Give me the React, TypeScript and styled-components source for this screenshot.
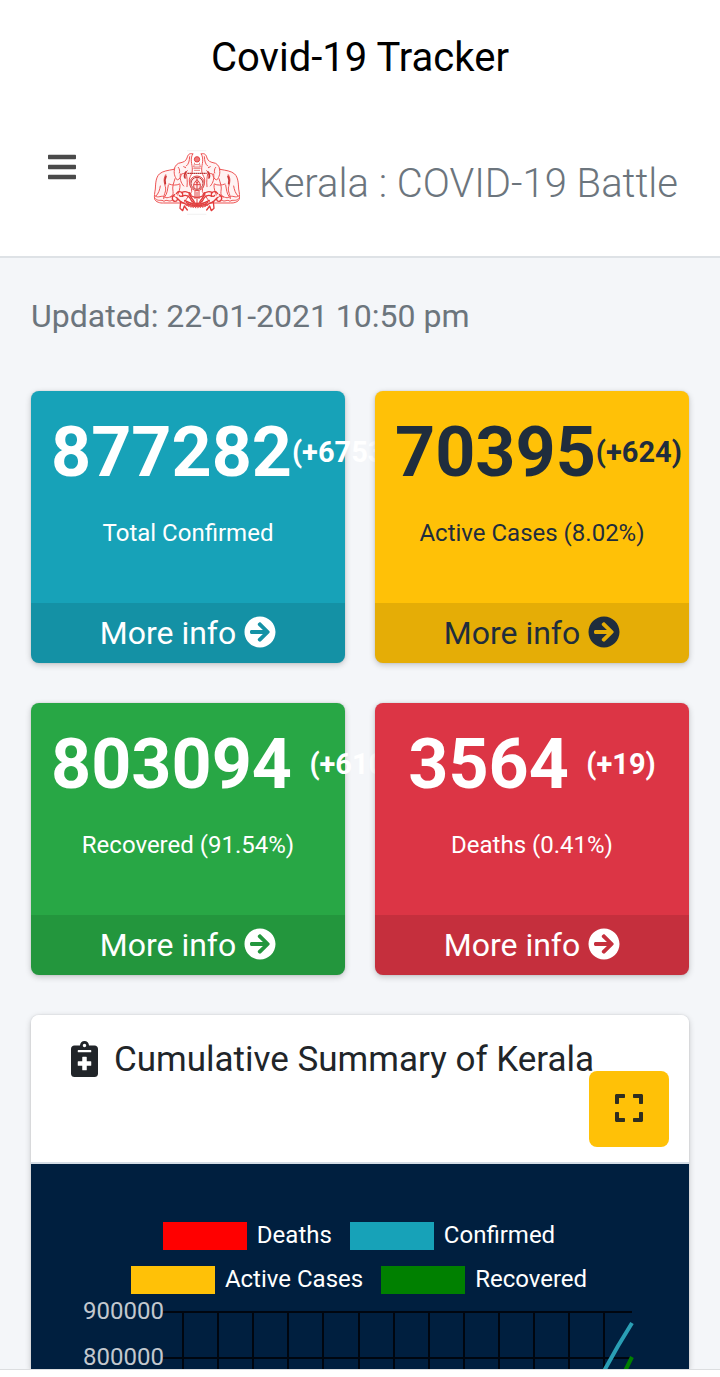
import React from "react";
import styled, { createGlobalStyle } from "styled-components";
import { FaArrowCircleRight, FaBars, FaExpand, FaNotesMedical } from "react-icons/fa";

const GlobalStyle = createGlobalStyle`
  *, *::before, *::after { box-sizing: border-box; }
  body {
    margin: 0;
    background: #fff;
    color: #212529;
    font-family: Roboto, "Liberation Sans", sans-serif;
  }
  h1, h2, h3, p { margin: 0; font-weight: 400; }
`;

const Shell = styled.div`
  min-height: 100vh;
  display: flex;
  flex-direction: column;
  overflow-x: hidden;
`;

const TitleBar = styled.header`
  display: flex;
  align-items: center;
  justify-content: center;
  height: 116px;
  background: #fff;
`;

const AppTitle = styled.h1`
  font-size: 40px;
  line-height: 48px;
  color: #000;
`;

const NavBar = styled.nav`
  display: flex;
  align-items: flex-start;
  justify-content: space-between;
  height: 142px;
  padding: 34px 42px 0 48px;
  background: #fff;
  border-bottom: 2px solid #dee2e6;
`;

const MenuButton = styled.button`
  display: flex;
  margin: 0;
  padding: 1px 0;
  border: 0;
  background: none;
  color: #4a4a4a;
  font-size: 32px;

  svg { width: 28px; height: 32px; }
`;

const Brand = styled.a`
  display: flex;
  align-items: center;
  gap: 19px;
  height: 68px;
  color: #6c757d;
  font-size: 40px;
  font-weight: 300;
  line-height: 48px;
  white-space: nowrap;
  text-decoration: none;
`;

const Crest = styled.svg`
  width: 88px;
  height: 68px;
`;

const Content = styled.main`
  flex: 1;
  display: flex;
  flex-direction: column;
  padding: 34px 31px 0;
  background: #f4f6f9;
`;

const Updated = styled.p`
  margin-bottom: 51px;
  font-size: 32px;
  line-height: 48px;
  color: #6c757d;
`;

const StatGrid = styled.section`
  display: grid;
  grid-template-columns: repeat(2, minmax(0, 1fr));
  gap: 40px 30px;
  margin-bottom: 40px;
`;

const StatCard = styled.article<{ $bg: string; $fg: string }>`
  position: relative;
  border-radius: 8px;
  background: ${(p) => p.$bg};
  color: ${(p) => p.$fg};
  box-shadow: 0 0 2px rgba(0, 0, 0, 0.125), 0 2px 6px rgba(0, 0, 0, 0.2);
`;

const StatBody = styled.div`
  padding: 20px 20px 52px;
  text-align: center;
`;

const StatValue = styled.h2`
  display: flex;
  justify-content: safe center;
  margin-bottom: 22px;
  font-size: 70px;
  font-weight: 700;
  line-height: 82px;
  white-space: pre;
`;

const Delta = styled.small`
  font-size: 29px;
`;

const StatLabel = styled.p`
  font-size: 24px;
  line-height: 36px;
`;

const MoreLink = styled.a`
  display: flex;
  align-items: center;
  justify-content: center;
  gap: 8px;
  height: 60px;
  border-radius: 0 0 8px 8px;
  background: rgba(0, 0, 0, 0.1);
  color: inherit;
  font-size: 32px;
  line-height: 48px;
  text-decoration: none;

  svg { margin-bottom: 2px; }
`;

const ChartCard = styled.section`
  flex: 1;
  display: flex;
  flex-direction: column;
  border-radius: 8px 8px 0 0;
  box-shadow: 0 0 2px rgba(0, 0, 0, 0.125), 0 2px 6px rgba(0, 0, 0, 0.2);
`;

const ChartHeader = styled.div`
  display: flex;
  flex-direction: column;
  padding: 23px 20px 15px;
  border-radius: 8px 8px 0 0;
  border-bottom: 2px solid #d5dde5;
  background: #fff;
`;

const ChartTitle = styled.h3`
  display: flex;
  align-items: center;
  gap: 16px;
  padding-left: 20px;
  font-size: 35px;
  line-height: 44px;
  white-space: nowrap;

  svg { width: 27px; height: 36px; margin-bottom: 2px; }
`;

const ExpandButton = styled.button`
  display: flex;
  align-items: center;
  justify-content: center;
  align-self: flex-end;
  width: 80px;
  height: 76px;
  margin: -11px 0 0;
  padding: 0 0 2px;
  border: 0;
  border-radius: 8px;
  background: #ffc107;
  color: #2f2e20;
  font-size: 32px;
`;

const ChartBody = styled.div`
  flex: 1;
  background: #001f3f;
`;

const Legend = styled.ul`
  display: flex;
  flex-wrap: wrap;
  justify-content: center;
  gap: 16px 18px;
  margin: 0;
  padding: 58px 22px 0 20px;
  list-style: none;
`;

const LegendItem = styled.li`
  display: flex;
  align-items: flex-start;
  gap: 10px;
  color: #fff;
  font-size: 24px;
  line-height: 26px;
`;

const Swatch = styled.span<{ $color: string }>`
  width: 84px;
  height: 28px;
  background: ${(p) => p.$color};
`;

const Plot = styled.svg`
  display: block;
  width: 100%;
  font-size: 24px;
`;

const BottomBar = styled.footer`
  position: relative;
  height: 8px;
  border-top: 1px solid #dcdee0;
  background: #fff;
`;

const stats = [
  { value: "877282", delta: "(+6753)", label: "Total Confirmed", bg: "#17a2b8", fg: "#fff" },
  { value: "70395", delta: "(+624)", label: "Active Cases (8.02%)", bg: "#ffc107", fg: "#1f2d3d" },
  { value: "803094 ", delta: "(+6109)", label: "Recovered (91.54%)", bg: "#28a745", fg: "#fff" },
  { value: "3564 ", delta: "(+19)", label: "Deaths (0.41%)", bg: "#dc3545", fg: "#fff" },
];

const series = [
  { name: "Deaths", color: "#ff0000" },
  { name: "Confirmed", color: "#17a2b8" },
  { name: "Active Cases", color: "#ffc107" },
  { name: "Recovered", color: "#008000" },
];

const gridColumns = Array.from({ length: 13 }, (_, i) => 152 + Math.round(i * 35.1));

/* One elephant with its share of the pedestal; the crest mirrors it. */
function Elephant() {
  return (
    <g fill="none" stroke="#ee5555" strokeWidth="3" strokeLinecap="round" strokeLinejoin="round">
      <path
        fill="#fff3f3"
        d="M157 38c-9-4-15 2-17 12-3 9-10 12-18 14-12 1-17 9-21 20-17 3-34 5-44 14-11 11-11 29-12 45-2 12-4 22-2 30 3 9 16 13 27 12h60l24-34c2-12-10-26-7-38 3-10 10-16 9-30 0-14-8-28 1-45z"
      />
      <path d="M148 46c-1 12-2 22-10 28M103 82c-4 12 0 26 8 34 8-3 11-10 12-18 8-1 14-4 18-10" />
      <path d="M114 78c4 4 5 12 3 17M130 76l6 3M120 98c-2 14 1 26 10 36M138 98c2 13 4 20 2 38" />
      <path d="M104 112c-4 14-9 24-6 38 2 8-2 14-8 17M86 128c9 4 22 5 32 0M119 130c1 13-4 22-7 31" />
      <path d="M76 100c-9 14-3 27 0 40 2 12-8 22-6 32M60 134c-2 12-5 22-13 30M84 131c-3 14-2 24-11 36" />
      <path stroke="#c93434" strokeWidth="5" d="M77 105c-5 9-4 15-2 22M137 92c-5 7-6 12-3 18" />
      <path d="M45 164c10 8 18-4 28 3 9 7 19-5 31-2M46 172c8 10 17 1 25 8 9-8 15 4 24-3" />
      <g stroke="#e23c3c" strokeWidth="4">
        <path d="M103 160c-10 4-9 19 1 20 8 0 10-10 3-12M108 157c6-9 16-8 19 0 2 8-7 11-10 5M113 173c7 9 19 15 32 17" />
        <path d="M121 181l-2 20 8 7 5-14 9 12M124 154c8-5 20-3 28 5M126 165c10-7 22 0 25 9 4 8 10 12 19 12" />
        <path d="M133 177c8 2 14 12 36 12M137 190c12 7 20 5 33 5M147 154c0 12 9 17 15 28" />
      </g>
    </g>
  );
}

function StateCrest() {
  return (
    <Crest viewBox="35 26 264 204" role="img" aria-label="Government of Kerala">
      <path d="M140 28h58M140 219h58" stroke="#ececec" strokeWidth="2" />
      <Elephant />
      <g transform="translate(340 0) scale(-1 1)">
        <Elephant />
      </g>
      <g fill="none" stroke="#e04040" strokeWidth="3">
        <circle cx="170" cy="54" r="8" fill="#f07878" />
        <path strokeWidth="2" d="M163 64l-3 13h20l-3-13M164 70h12M159 81h22M161 87h18" />
        <path stroke="#b93434" strokeWidth="4" strokeDasharray="5 1" d="M141 96h58" />
        <circle cx="170" cy="126" r="22" fill="#ffeaea" />
        <circle cx="170" cy="126" r="18" stroke="#b93434" strokeWidth="3" />
        <path d="M170 108v35M163 142c-7-12-1-18 7-27 8 9 14 15 7 27M160 130h20M165 120l5 6 5-6M164 149v24M176 149v24M170 151v36" />
        <path d="M145 157c7 9 16 11 25 11s18-2 25-11M136 181c16 16 52 16 68 0M150 184c8 6 32 6 40 0" strokeWidth="4" />
        <path strokeDasharray="4 3" strokeWidth="6" stroke="#e65a5a" d="M137 190c18 10 48 10 66 0" />
      </g>
    </Crest>
  );
}

export default function App() {
  return (
    <Shell>
      <GlobalStyle />
      <TitleBar>
        <AppTitle>Covid-19 Tracker</AppTitle>
      </TitleBar>
      <NavBar>
        <MenuButton type="button" aria-label="Open menu">
          <FaBars />
        </MenuButton>
        <Brand href="#">
          <StateCrest />
          <span>Kerala : COVID-19 Battle</span>
        </Brand>
      </NavBar>
      <Content>
        <Updated>Updated: 22-01-2021 10:50 pm</Updated>
        <StatGrid>
          {stats.map((s) => (
            <StatCard key={s.label} $bg={s.bg} $fg={s.fg}>
              <StatBody>
                <StatValue>
                  <span>{s.value}</span>
                  <Delta>{s.delta}</Delta>
                </StatValue>
                <StatLabel>{s.label}</StatLabel>
              </StatBody>
              <MoreLink href="#">
                More info <FaArrowCircleRight />
              </MoreLink>
            </StatCard>
          ))}
        </StatGrid>
        <ChartCard>
          <ChartHeader>
            <ChartTitle>
              <FaNotesMedical />
              Cumulative Summary of Kerala
            </ChartTitle>
            <ExpandButton type="button" aria-label="Expand chart">
              <FaExpand />
            </ExpandButton>
          </ChartHeader>
          <ChartBody>
            <Legend>
              {series.map((s) => (
                <LegendItem key={s.name}>
                  <Swatch $color={s.color} />
                  {s.name}
                </LegendItem>
              ))}
            </Legend>
            <Plot viewBox="0 0 658 75" role="img" aria-label="Cumulative cases by date">
              <g stroke="#00060f" strokeWidth="2">
                <path d="M132 18H601M132 64H601" />
                {gridColumns.map((x) => (
                  <path key={x} d={`M${x} 18V75`} />
                ))}
              </g>
              <g fill="none" strokeWidth="4">
                <path stroke="#008000" d="M601 63L594 77" />
                <path stroke="#2a9fb5" d="M601 29L587 52L573 77" />
              </g>
              <g fill="#c3c8ce" textAnchor="end">
                <text x="133" y="25">900000</text>
                <text x="133" y="71">800000</text>
              </g>
            </Plot>
          </ChartBody>
        </ChartCard>
      </Content>
      <BottomBar />
    </Shell>
  );
}
